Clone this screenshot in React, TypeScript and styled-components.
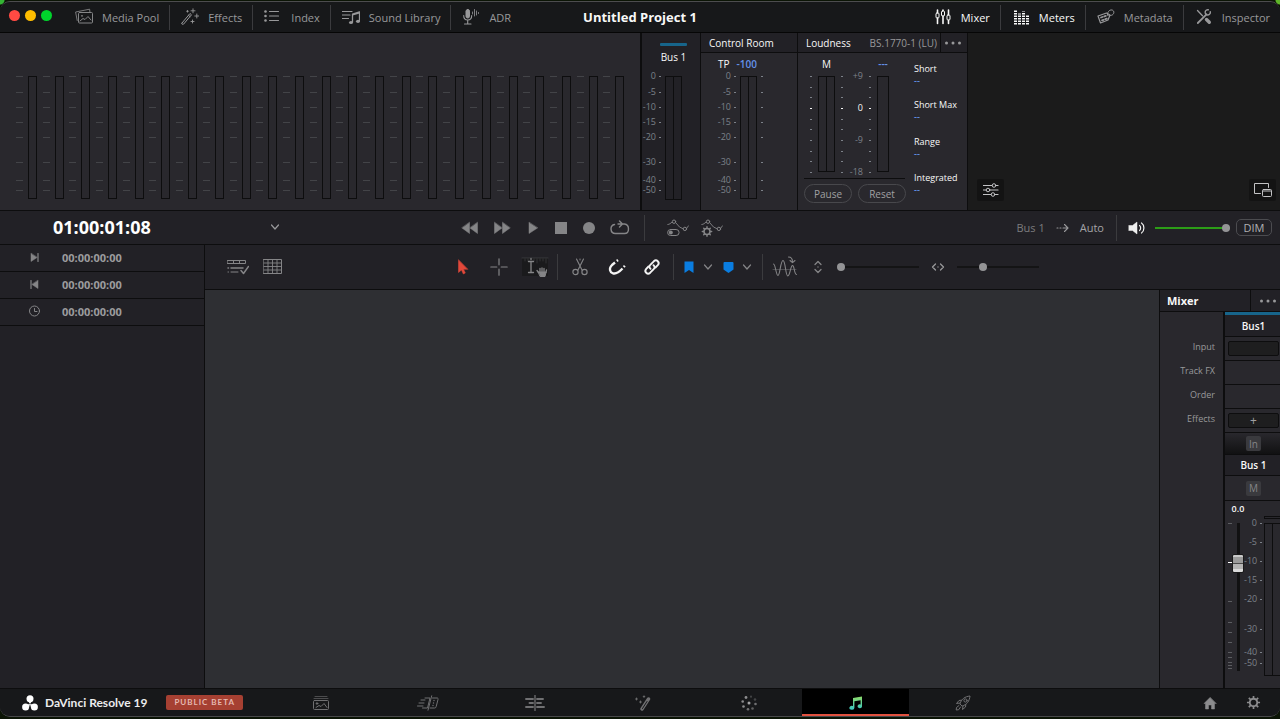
import React from 'react';
import styled, { createGlobalStyle, css } from 'styled-components';

const color = {
  bar: '#17181a',
  panel: '#29282d',
  panelDark: '#222126',
  canvas: '#2e2f33',
  line: '#0d0d0e',
  divider: '#3b3b3e',
  text: '#98989a',
  icon: '#858587',
  dim: '#7c8189',
  white: '#f8f8f8',
  blue: '#6492ea',
  bus: '#17658b',
};

const GlobalStyle = createGlobalStyle`
  * { box-sizing: border-box; }
  body {
    margin: 0;
    background:
      radial-gradient(circle at 0 0, #35b535 0 4px, transparent 5px),
      radial-gradient(circle at 100% 0, #5fb52a 0 4px, transparent 5px),
      #0b1405;
    color: ${color.text};
    font-family: "Open Sans", "Noto Sans", sans-serif;
    font-size: 11px;
  }
  button, input {
    margin: 0;
    padding: 0;
    border: 0;
    background: none;
    color: inherit;
    font: inherit;
  }
  svg { display: block; flex: none; }
`;

const Window = styled.div`
  min-height: 100vh;
  padding: 1px 0 2px;
  display: flex;
  flex-direction: column;
`;

const Frame = styled.div`
  flex: 1;
  display: flex;
  flex-direction: column;
  overflow: hidden;
  border-top: 1px solid #4c4c4e;
  border-bottom: 1px solid #48484a;
  border-radius: 10px;
  background: ${color.panelDark};
`;

/* ---------- header ---------- */

const Header = styled.header`
  display: grid;
  grid-template-columns: 1fr auto 1fr;
  align-items: center;
  height: 31px;
  background: ${color.bar};
  border-bottom: 1px solid #060606;
`;

const HeaderGroup = styled.div<{ $end?: boolean }>`
  display: flex;
  align-items: center;
  justify-content: ${p => (p.$end ? 'flex-end' : 'flex-start')};
`;

const Lights = styled.div`
  display: flex;
  gap: 5px;
  padding: 0 12px 3px 9px;
`;

const Light = styled.button<{ $color: string }>`
  width: 11px;
  height: 11px;
  border-radius: 50%;
  background: ${p => p.$color};
`;

const HeaderButton = styled.button<{ $on?: boolean }>`
  display: flex;
  align-items: center;
  gap: 9px;
  height: 25px;
  padding: 0 10px 0 11px;
  white-space: nowrap;
  color: ${p => (p.$on ? color.white : color.text)};
  & + & { border-left: 1px solid ${color.divider}; }
`;

const Title = styled.h1`
  margin: 0;
  padding-bottom: 1px;
  font-size: 13px;
  line-height: 18px;
  font-weight: 700;
  color: ${color.white};
`;

/* ---------- meters ---------- */

const MetersRow = styled.section`
  display: flex;
  min-height: 178px;
  background: ${color.panel};
  border-bottom: 1px solid ${color.line};
`;

const TrackMeters = styled.div`
  flex: 1;
  display: grid;
  grid-template-columns: repeat(23, 1fr);
  padding: 43px 10px 0 16px;
`;

const TrackMeter = styled.div`
  display: flex;
  align-items: flex-start;
  gap: 5px;
`;

const TrackTick = styled.div<{ $gap: number }>`
  width: 7px;
  height: ${p => p.$gap}px;
  border-top: 1px solid #434448;
`;

const Bar = styled.div<{ $height: number; $width?: number }>`
  display: flex;
  flex: none;
  width: ${p => p.$width ?? 17}px;
  height: ${p => p.$height}px;
  border: 1px solid ${color.line};
  span {
    flex: 1;
  }
  span + span { border-left: 1px solid ${color.line}; }
`;

const Scale = styled.div<{ $height?: number }>`
  display: flex;
  flex-direction: column;
  ${p => p.$height && css`
    height: ${p.$height}px;
    justify-content: space-between;
  `}
`;

const ScaleRow = styled.div<{ $gap: number; $strong?: boolean }>`
  display: flex;
  justify-content: flex-end;
  gap: 3px;
  height: ${p => p.$gap}px;
  font-size: 9px;
  line-height: 10px;
  white-space: nowrap;
  color: ${p => (p.$strong ? color.white : color.dim)};
`;

const Dash = styled.i`
  width: 2px;
  height: 1px;
  margin-top: 5px;
  background: currentColor;
`;

const BusPanel = styled.div`
  width: 60px;
  padding: 10px 0 0;
  background: ${color.panelDark};
  border-left: 2px solid ${color.line};
`;

const BusStripe = styled.div`
  width: 27px;
  height: 3px;
  margin: 0 0 4px 18px;
  border-radius: 1px;
  background: ${color.bus};
`;

const BusName = styled.div`
  width: 27px;
  margin: 0 0 7px 18px;
  font-size: 10px;
  line-height: 14px;
  text-align: center;
  white-space: nowrap;
  color: ${color.white};
`;

const MeterGroup = styled.div<{ $indent?: number }>`
  display: flex;
  align-items: flex-start;
  gap: 4px;
  padding-left: ${p => p.$indent ?? 0}px;
  ${Bar} { margin-top: 5px; }
  ${Scale}:first-child { width: 19px; }
`;

const Panel = styled.div<{ $width: number }>`
  width: ${p => p.$width}px;
  border-left: 1px solid ${color.line};
`;

const PanelHead = styled.div`
  display: flex;
  align-items: center;
  height: 20px;
  padding-left: 8px;
  font-size: 10px;
  color: ${color.white};
  background: ${color.panelDark};
  border-bottom: 1px solid ${color.line};
`;

const Standard = styled.span`
  margin-left: auto;
  padding-right: 3px;
  color: ${color.text};
`;

const DotsButton = styled.button`
  display: flex;
  align-items: center;
  justify-content: center;
  width: 27px;
  padding-right: 2px;
  align-self: stretch;
  border-left: 1px solid ${color.line};
  color: #98989a;
`;

const PeakRow = styled.div`
  display: flex;
  gap: 7px;
  padding: 4px 0 0 17px;
  font-size: 10px;
  line-height: 14px;
  color: ${color.white};
`;

const Value = styled.span`
  font-weight: 600;
  color: ${color.blue};
`;

const LoudnessBody = styled.div`
  display: flex;
  height: 157px;
`;

const LoudnessLeft = styled.div`
  width: 110px;
  padding: 4px 0 0 6px;
`;

const LoudnessGrid = styled.div`
  display: grid;
  grid-template-columns: 2px 17px 2px 14px 2px 12px;
  grid-template-rows: 14px 107px;
  column-gap: 6px;
  width: 101px;
  padding-left: 6px;
  border-bottom: 1px solid ${color.line};
  font-size: 10px;
  line-height: 14px;
  color: ${color.white};
  ${Bar} { margin-top: 5px; }
`;

const GridHead = styled.div<{ $column: number }>`
  grid-column: ${p => p.$column};
  text-align: center;
`;

const ButtonPair = styled.div`
  display: flex;
  gap: 6px;
  padding-top: 5px;
`;

const PillButton = styled.button`
  width: 48px;
  height: 19px;
  border: 1px solid #48484c;
  border-radius: 10px;
  font-size: 10px;
  line-height: 14px;
  color: #a0a0a2;
`;

const Stats = styled.dl`
  display: flex;
  flex-direction: column;
  justify-content: space-between;
  flex: 1;
  margin: 0;
  padding: 10px 0 14px 6px;
  font-size: 9px;
  line-height: 12px;
  white-space: nowrap;
  color: ${color.white};
  dd {
    margin: 0;
    font-weight: 600;
    color: ${color.blue};
  }
`;

const Preview = styled.div`
  display: flex;
  align-items: flex-end;
  justify-content: space-between;
  width: 313px;
  padding: 0 4px 9px 9px;
  background: #1b1b1b;
  border-left: 1px solid ${color.line};
`;

const PreviewButton = styled.button`
  display: flex;
  align-items: center;
  justify-content: center;
  width: 27px;
  height: 22px;
  border-radius: 2px;
  background: #131313;
  color: #c2c2c4;
`;

/* ---------- transport ---------- */

const Transport = styled.section`
  display: grid;
  grid-template-columns: 36% auto 1fr;
  align-items: center;
  height: 34px;
  border-bottom: 1px solid ${color.line};
`;

const ClockBox = styled.div`
  display: flex;
  align-items: center;
  gap: 119px;
  padding: 0 0 1px 53px;
`;

const Timecode = styled.output`
  font-size: 18px;
  line-height: 24px;
  font-weight: 700;
  color: #ffffff;
`;

const IconButton = styled.button<{ $width?: number; $color?: string }>`
  display: flex;
  align-items: center;
  justify-content: center;
  width: ${p => p.$width ?? 30}px;
  height: 24px;
  color: ${p => p.$color ?? color.icon};
`;

const IconRow = styled.div<{ $gap?: number; $before?: number; $after?: number }>`
  display: flex;
  align-items: center;
  gap: ${p => p.$gap ?? 0}px;
  padding: 0 ${p => p.$after ?? 0}px 0 ${p => p.$before ?? 0}px;
`;

const Divider = styled.i<{ $margin?: number }>`
  width: 1px;
  height: 26px;
  margin: 0 ${p => p.$margin ?? 0}px;
  background: ${color.divider};
`;

const Monitor = styled.div`
  display: flex;
  align-items: center;
  justify-content: flex-end;
  gap: 10px;
  padding-right: 8px;
`;

const TextButton = styled.button<{ $bright?: boolean }>`
  color: ${p => (p.$bright ? '#a4a4a6' : '#7c7c7e')};
`;

const DimButton = styled.button`
  width: 36px;
  height: 17px;
  border: 1px solid #4c4c50;
  border-radius: 5px;
  line-height: 14px;
  color: #b0b0b2;
`;

const Slider = styled.input<{ $width: number; $track?: string }>`
  appearance: none;
  width: ${p => p.$width}px;
  height: 10px;
  background: linear-gradient(${p => p.$track ?? '#141415'} 0 0) center / 100% 2px no-repeat;
  &::-webkit-slider-thumb {
    appearance: none;
    width: 8px;
    height: 8px;
    border-radius: 50%;
    background: #949496;
  }
`;

/* ---------- workspace ---------- */

const Workspace = styled.main`
  flex: 1;
  display: flex;
`;

const Sidebar = styled.aside`
  width: 16%;
  border-right: 1px solid ${color.line};
`;

const TimeRow = styled.div`
  display: flex;
  align-items: center;
  gap: 21px;
  height: 27px;
  padding: 0 0 2px 28px;
  font-weight: 700;
  color: #9c9c9e;
  border-bottom: 1px solid ${color.line};
  svg { color: ${color.icon}; }
`;

const Center = styled.div`
  flex: 1;
  display: flex;
  flex-direction: column;
`;

const Toolbar = styled.div`
  display: grid;
  grid-template-columns: 1fr auto 1fr;
  align-items: center;
  height: 45px;
  padding: 0 5px 0 16px;
  border-bottom: 1px solid ${color.line};
`;

const Stage = styled.div`
  flex: 1;
  display: flex;
`;

const Timeline = styled.div`
  flex: 1;
  background: ${color.canvas};
`;

/* ---------- mixer ---------- */

const Mixer = styled.aside`
  width: 121px;
  display: flex;
  flex-direction: column;
  background: ${color.panel};
  border-left: 1px solid ${color.line};
`;

const MixerHead = styled.div`
  display: flex;
  align-items: center;
  justify-content: space-between;
  height: 22px;
  padding-left: 7px;
  font-size: 11px;
  background: ${color.panelDark};
  border-bottom: 1px solid ${color.line};
  h2 {
    margin: 0;
    font-size: inherit;
    color: ${color.white};
  }
  ${DotsButton} { width: 30px; padding: 0 0 0 5px; }
`;

const MixerBody = styled.div`
  flex: 1;
  display: flex;
`;

const MixerLabels = styled.div`
  flex: 1;
  padding: 23px 8px 0 0;
  font-size: 9px;
  line-height: 24px;
  text-align: right;
`;

const Strip = styled.div`
  width: 57px;
  border-left: 2px solid ${color.line};
`;

const StripCell = styled.div<{ $height?: number; $title?: boolean; $fade?: boolean }>`
  display: flex;
  align-items: center;
  justify-content: center;
  height: ${p => p.$height ?? 24}px;
  padding: 0 1px 0 3px;
  font-size: 10px;
  border-bottom: 1px solid ${color.line};
  ${p => p.$title && css`
    font-weight: 600;
    color: ${color.white};
    background: ${color.panelDark};
  `}
  ${p => p.$fade && css`
    background: linear-gradient(${color.panel}, #111112);
  `}
`;

const StripStripe = styled.div`
  height: 3px;
  background: ${color.bus};
`;

const Slot = styled.button`
  width: 100%;
  height: 15px;
  border: 1px solid ${color.line};
  border-radius: 2px;
  font-size: 12px;
  line-height: 12px;
  background: #1e1e1f;
  color: #a0a0a2;
`;

const SquareButton = styled.button`
  width: 15px;
  height: 15px;
  border-radius: 2px;
  font-size: 10px;
  line-height: 14px;
  background: #3a3a3e;
  color: #858587;
`;

const Level = styled.div`
  width: 26px;
  padding-top: 2px;
  font-size: 9px;
  line-height: 12px;
  font-weight: 600;
  text-align: center;
  color: ${color.white};
`;

const FaderRow = styled.div`
  display: flex;
  align-items: flex-start;
  padding-left: 3px;
`;

const FaderScale = styled.div`
  width: 18px;
  padding-top: 3px;
`;

const FaderTicks = styled.div`
  width: 4px;
  padding-top: 8px;
`;

const FaderTick = styled.div<{ $gap: number; $zero?: boolean }>`
  height: ${p => p.$gap}px;
  border-top: 1px solid ${p => (p.$zero ? '#ffffff' : '#5c5d61')};
`;

const Fader = styled.input`
  appearance: none;
  writing-mode: vertical-lr;
  direction: rtl;
  width: 12px;
  height: 148px;
  margin: 8px 0 0;
  background: linear-gradient(#111112 0 0) center / 3px 100% no-repeat;
  &::-webkit-slider-thumb {
    appearance: none;
    width: 12px;
    height: 19px;
    border: 1px solid #1a1a1b;
    border-radius: 2px;
    background: linear-gradient(#c9c9c9 0 2px, #9b9b9b 2px 8px, #4a4a4a 8px 9px, #b4b4b4 9px 14px, #dadada 14px);
  }
`;

const StereoMeter = styled.div`
  flex: 1;
  margin-left: 2px;
  padding-top: 1px;
`;

const Peak = styled.div`
  height: 3px;
  margin-bottom: 4px;
  border: 1px solid ${color.line};
  border-right: 0;
`;

const Columns = styled.div`
  display: flex;
  height: 153px;
  border: 1px solid ${color.line};
  border-right: 0;
  span { width: 7px; }
  span + span { width: auto; flex: 1; border-left: 1px solid ${color.line}; }
`;

/* ---------- footer ---------- */

const Footer = styled.footer`
  display: grid;
  grid-template-columns: 1fr auto 1fr;
  align-items: center;
  height: 28px;
  padding: 0 19px 0 22px;
  background: ${color.bar};
  border-top: 1px solid ${color.line};
`;

const Brand = styled.div`
  display: flex;
  align-items: center;
  gap: 7px;
  font-family: Lato, sans-serif;
  font-size: 12px;
  font-weight: 700;
  white-space: nowrap;
  color: #ececed;
`;

const Beta = styled.span`
  margin-left: 12px;
  padding: 0 8px;
  border-radius: 2px;
  font-family: Lato, sans-serif;
  font-size: 8px;
  line-height: 15px;
  font-weight: 700;
  letter-spacing: 1px;
  background: #a64032;
  color: #e5b9b1;
`;

const Pages = styled.nav`
  display: flex;
  align-self: stretch;
`;

const PageButton = styled.button<{ $active?: boolean }>`
  display: flex;
  align-items: center;
  justify-content: center;
  width: 107px;
  padding-top: 2px;
  color: #707072;
  border-bottom: 2px solid ${p => (p.$active ? '#e2523f' : 'transparent')};
  background: ${p => (p.$active ? '#000000' : 'none')};
`;

const FooterEnd = styled.div`
  display: flex;
  justify-content: flex-end;
  gap: 29px;
  button { color: #8c8c8e; }
`;

/* ---------- icons ---------- */

interface IconProps {
  w?: number;
  h?: number;
  children: React.ReactNode;
}

const Icon = ({ w = 18, h = 18, children }: IconProps) => (
  <svg width={w} height={h} viewBox={`0 0 ${w} ${h}`} fill="none" stroke="currentColor" strokeLinecap="round" strokeLinejoin="round" aria-hidden="true">
    {children}
  </svg>
);

const MediaPoolIcon = () => (
  <Icon>
    <g opacity=".85">
      <path d="M2.200 12.500L.6 4l14-2.800.3 2.500" strokeWidth=".9" />
      <rect x="3.500" y="4.500" width="14" height="10.500" rx="1" />
      <circle cx="7" cy="7.800" r=".9" fill="currentColor" stroke="none" />
      <path d="M5 13l3-2.500 2 1 3-3 3 3.500" />
    </g>
  </Icon>
);

const WandIcon = () => (
  <Icon>
    <path d="M1 15l8-9.500 1.500 1.300-8 9.400c-.9.700-2.200-.2-1.500-1.200z" />
    <path d="M7.500 7.300L9 8.600" />
    <path d="M12 .8v4M10 2.800h4M15.800 6v4M13.800 8h4M11.500 12v3M10 13.500h3M6.500 2.500v1.600M5.700 3.300h1.600" strokeWidth=".9" />
  </Icon>
);

const IndexIcon = () => (
  <Icon>
    <g fill="currentColor" stroke="none">
      <circle cx="1.500" cy="3.500" r="1.300" />
      <circle cx="1.500" cy="8" r="1.300" />
      <circle cx="1.500" cy="12.500" r="1.300" />
    </g>
    <path d="M5.500 3.500h9M5.500 8h9M5.500 12.500h9" strokeWidth="1.200" />
  </Icon>
);

const LibraryIcon = () => (
  <Icon>
    <path d="M0 3.500h10M0 7h8M0 10.500h6.500" strokeWidth="1.200" />
    <path d="M10.500 14V6l7-2.200V13M10.500 7l7-2" strokeWidth="1.300" />
    <ellipse cx="9" cy="14.500" rx="2" ry="1.600" fill="currentColor" stroke="none" />
    <ellipse cx="16" cy="13.300" rx="2" ry="1.600" fill="currentColor" stroke="none" />
  </Icon>
);

const AdrIcon = () => (
  <Icon>
    <rect x="4" y="1.500" width="3.500" height="8.500" rx="1.700" fill="currentColor" />
    <path d="M1.700 7.500c0 6 8 6 8 0M5.700 12.500v3.300M2.500 16h6.500" strokeWidth="1.100" />
    <path d="M10.500 4v2M12.500 1.500v6.500M14.500 3v4M16.500 4.500v1" strokeWidth=".8" />
  </Icon>
);

const MixerIcon = () => (
  <Icon>
    <path d="M3.500 2v2.500M3.500 10v5.500M9 2v.5M9 8v7.500M14.500 2v4.500M14.500 12.500v3" strokeWidth="1.600" />
    <rect x="2" y="5" width="3" height="5" rx="1" />
    <rect x="7.500" y="3" width="3" height="5" rx="1" />
    <rect x="13" y="7" width="3" height="5" rx="1" />
  </Icon>
);

const MetersIcon = () => (
  <Icon>
    <path d="M3.500 16.500V2.500M7.500 16.500V5.500M11.500 16.500V3.500M15.500 16.500V6.500" strokeWidth="3" strokeDasharray="1.500 1" strokeLinecap="butt" />
  </Icon>
);

const MetadataIcon = () => (
  <Icon>
    <path d="M1 8l8.500-3L13 7l-2 5-7.500 3z" strokeWidth="1.200" />
    <path d="M4 9.500l1.500-.5M7.300 8.400l1.500-.5M5 12.300l1.500-.5M8.300 11.200l1.500-.5" strokeWidth="1.800" />
    <path d="M10.500 7.300C10 1.500 16 .5 16.800 3.800 17.200 6.500 14.500 8 11.800 7.500" />
  </Icon>
);

const InspectorIcon = () => (
  <Icon>
    <path d="M2.500 2.500l5 5.200" strokeWidth="1.300" />
    <path d="M11.500 11.500l2.800 2.800" strokeWidth="3.400" />
    <path d="M2.800 15l8.700-8.700" strokeWidth="1.800" />
    <path d="M15.300 3.800a2.600 2.600 0 1 1-2-2" strokeWidth="1.400" />
  </Icon>
);

const Dots = () => (
  <svg width="18" height="4" viewBox="0 0 18 4" fill="currentColor" aria-hidden="true">
    <circle cx="2.500" cy="2" r="1.500" />
    <circle cx="9" cy="2" r="1.500" />
    <circle cx="15.500" cy="2" r="1.500" />
  </svg>
);

const Chevron = () => (
  <Icon w={10} h={8}>
    <path d="M1.500 2L5 6l3.500-4" strokeWidth="1.200" />
  </Icon>
);

const GearIcon = ({ size = 16 }: { size?: number }) => (
  <svg width={size} height={size} viewBox="0 0 16 16" fill="none" stroke="currentColor" aria-hidden="true">
    <circle cx="8" cy="8" r="4" strokeWidth="2" />
    <path d="M8 1v3M8 12v3M1 8h3M12 8h3M3 3l2.200 2.200M10.800 10.800L13 13M13 3l-2.200 2.200M5.200 10.800L3 13" strokeWidth="1.800" />
  </svg>
);

const CurvePath = () => (
  <>
    <path d="M.8 5.500c2 0 2.700-1.300 4-2.300M9 4l3.500 4 3.300 1.600M20 8.800l1.500-2" strokeWidth=".9" />
    <circle cx="7" cy="2.700" r="1.700" />
    <circle cx="17.900" cy="9.900" r="1.700" />
  </>
);

const NoteIcon = () => (
  <svg width="13" height="14" viewBox="0 0 13 14" aria-hidden="true">
    <defs>
      <linearGradient id="note" x1="0" y1="0" x2="0" y2="1">
        <stop offset="0" stopColor="#8fdc6a" />
        <stop offset="1" stopColor="#38c8c4" />
      </linearGradient>
    </defs>
    <path d="M4 2l9-1.500v9.700a2.200 1.900 0 1 1-1.400-1.700V4.200L5.400 5.300v6.500A2.500 2 0 1 1 4 10z" fill="url(#note)" />
  </svg>
);

/* ---------- data ---------- */

const levels = [
  { label: '0', gap: 16 },
  { label: '-5', gap: 15 },
  { label: '-10', gap: 15 },
  { label: '-15', gap: 15 },
  { label: '-20', gap: 25 },
  { label: '-30', gap: 18 },
  { label: '-40', gap: 10 },
  { label: '-50', gap: 10 },
];

const faderGaps = [19, 19, 19, 19, 30, 23, 11, 10];
const faderTicks = [39, 39, 21, 10, 10, 10, 5, 5, 3, 3, 3];
const tracks = Array.from({ length: 23 }, (_, i) => i);
const loudnessSteps = Array.from({ length: 10 }, (_, i) => i);

const leftTabs = [
  { name: 'Media Pool', icon: <MediaPoolIcon /> },
  { name: 'Effects', icon: <WandIcon /> },
  { name: 'Index', icon: <IndexIcon /> },
  { name: 'Sound Library', icon: <LibraryIcon /> },
  { name: 'ADR', icon: <AdrIcon /> },
];

const rightTabs = [
  { name: 'Mixer', icon: <MixerIcon />, on: true },
  { name: 'Meters', icon: <MetersIcon />, on: true },
  { name: 'Metadata', icon: <MetadataIcon /> },
  { name: 'Inspector', icon: <InspectorIcon /> },
];

const stats = ['Short', 'Short Max', 'Range', 'Integrated'];

const pages = [
  {
    name: 'Media',
    icon: (
      <Icon w={16} h={16}>
        <path d="M2 1.500h12M1 3.500h14" opacity=".6" />
        <rect x=".5" y="5.500" width="15" height="9" rx="1" />
        <circle cx="4" cy="8.500" r=".8" fill="currentColor" />
        <path d="M3 12.500l3-2 2 1 3-3 3 4" />
      </Icon>
    ),
  },
  {
    name: 'Cut',
    icon: (
      <Icon w={22} h={16}>
        <path d="M8 3h5l-2.500 10h-5M15.500 3H20c1 0 1.300.6 1 1.500l-1.800 7c-.2 1-.7 1.500-1.500 1.500H13M14.700.8L11 15.200" />
        <path d="M4 5h4M2 8h5M.5 11H6" />
        <path d="M17 5.500v0M16.500 8v0M16 10.500v0" strokeWidth="1.400" />
      </Icon>
    ),
  },
  {
    name: 'Edit',
    icon: (
      <Icon w={20} h={16}>
        <path d="M10 .5v15" strokeWidth="1.300" />
        <path d="M1 4h7M12 4h6M4.500 8H8M12 8h4M1 12h7M12 12h7" strokeWidth="1.900" />
      </Icon>
    ),
  },
  {
    name: 'Fusion',
    icon: (
      <Icon w={18} h={16}>
        <path d="M9 14L15.500 4" strokeWidth="3.400" />
        <path d="M9.500 13.500L14 6.500" strokeWidth="1" stroke="#17181a" />
        <path d="M11 .8v1.600M10.200 1.600h1.600M3.500 3v2M2.500 4h2M7.500 6v2M6.500 7h2" strokeWidth=".9" />
      </Icon>
    ),
  },
  {
    name: 'Color',
    icon: (
      <Icon w={16} h={16}>
        <g fill="currentColor" stroke="none">
          <circle cx="8" cy="8" r="1.500" fill="#a4a4a6" />
          <circle cx="5" cy="2.500" r="1.400" fill="#8c8c8e" />
          <circle cx="10" cy="1.700" r="1.100" opacity=".5" />
          <circle cx="14" cy="4.500" r="1.300" opacity=".5" />
          <circle cx="14.500" cy="9" r="1.300" />
          <circle cx="11.500" cy="13.500" r="1.300" opacity=".8" />
          <circle cx="7" cy="14.300" r="1.300" />
          <circle cx="2.500" cy="11.500" r="1.300" fill="#8c8c8e" />
          <circle cx="1.700" cy="6.500" r="1.300" fill="#8c8c8e" />
        </g>
      </Icon>
    ),
  },
  { name: 'Fairlight', icon: <NoteIcon />, active: true },
  {
    name: 'Deliver',
    icon: (
      <Icon w={16} h={16}>
        <path d="M5 8.500C6.500 4 10 1.500 15 1c-.5 5-3 8.500-7.500 10zM5 8l-3.500.5L4 5.500l2.500-.3M8 11l-.5 3.500 3-2.500.3-2.500M4 10.500L1.500 12.500l-.3 2.500 2.500-.3L5.500 12" />
        <circle cx="10.500" cy="5.500" r="1.600" />
      </Icon>
    ),
  },
];

/* ---------- composed parts ---------- */

const LevelScale = ({ gaps }: { gaps?: number[] }) => (
  <Scale>
    {levels.map((l, i) => (
      <ScaleRow key={l.label} $gap={gaps ? gaps[i] : l.gap}>
        {l.label}
        <Dash />
      </ScaleRow>
    ))}
  </Scale>
);

const DashScale = () => (
  <Scale>
    {levels.map(l => (
      <ScaleRow key={l.label} $gap={l.gap}><Dash /></ScaleRow>
    ))}
  </Scale>
);

const LoudnessTicks = () => (
  <Scale $height={106}>
    {loudnessSteps.map(i => (
      <ScaleRow key={i} $gap={10} $strong={i === 3}><Dash /></ScaleRow>
    ))}
  </Scale>
);

const AppHeader = () => (
  <Header>
    <HeaderGroup>
      <Lights>
        <Light $color="#ff4a43" aria-label="Close" />
        <Light $color="#ffbd00" aria-label="Minimize" />
        <Light $color="#00d42c" aria-label="Zoom" />
      </Lights>
      <HeaderGroup>
        {leftTabs.map(t => <HeaderButton key={t.name}>{t.icon}{t.name}</HeaderButton>)}
      </HeaderGroup>
    </HeaderGroup>
    <Title>Untitled Project 1</Title>
    <HeaderGroup $end>
      {rightTabs.map(t => <HeaderButton key={t.name} $on={t.on}>{t.icon}{t.name}</HeaderButton>)}
    </HeaderGroup>
  </Header>
);

const Meters = () => (
  <MetersRow>
    <TrackMeters>
      {tracks.map(i => (
        <TrackMeter key={i}>
          <div>{levels.map(l => <TrackTick key={l.label} $gap={l.gap} />)}</div>
          <Bar $width={9} $height={123} />
        </TrackMeter>
      ))}
    </TrackMeters>
    <BusPanel>
      <BusStripe />
      <BusName>Bus 1</BusName>
      <MeterGroup>
        <LevelScale />
        <Bar $height={124}><span /><span /></Bar>
      </MeterGroup>
    </BusPanel>
    <Panel $width={97}>
      <PanelHead>Control Room</PanelHead>
      <PeakRow>TP <Value>-100</Value></PeakRow>
      <MeterGroup $indent={16}>
        <LevelScale />
        <Bar $height={123}><span /><span /></Bar>
        <DashScale />
      </MeterGroup>
    </Panel>
    <Panel $width={170}>
      <PanelHead>
        Loudness
        <Standard>BS.1770-1 (LU)</Standard>
        <DotsButton aria-label="Loudness options"><Dots /></DotsButton>
      </PanelHead>
      <LoudnessBody>
        <LoudnessLeft>
          <LoudnessGrid>
            <GridHead $column={2}>M</GridHead>
            <GridHead $column={6}><Value>---</Value></GridHead>
            <LoudnessTicks />
            <Bar $height={96}><span /><span /></Bar>
            <LoudnessTicks />
            <Scale $height={106}>
              {['+9', '0', '-9', '-18'].map(v => (
                <ScaleRow key={v} $gap={10} $strong={v === '0'}>{v}</ScaleRow>
              ))}
            </Scale>
            <LoudnessTicks />
            <Bar $width={12} $height={96} />
          </LoudnessGrid>
          <ButtonPair>
            <PillButton>Pause</PillButton>
            <PillButton>Reset</PillButton>
          </ButtonPair>
        </LoudnessLeft>
        <Stats>
          {stats.map(s => <div key={s}><dt>{s}</dt><dd>--</dd></div>)}
        </Stats>
      </LoudnessBody>
    </Panel>
    <Preview>
      <PreviewButton aria-label="Viewer settings">
        <Icon w={16} h={14}>
          <path d="M.5 2.500H9M13 2.500h2M.5 7H3M7 7h8M.5 11.500H8M12 11.500h3" strokeWidth="1.200" />
          <circle cx="11" cy="2.500" r="1.800" />
          <circle cx="5" cy="7" r="1.800" />
          <circle cx="10" cy="11.500" r="1.800" />
        </Icon>
      </PreviewButton>
      <PreviewButton aria-label="Undock viewer">
        <Icon w={18} h={14}>
          <path d="M6.500 10.500h-6V.5h14v4" />
          <rect x="8.500" y="6.500" width="9" height="7" rx="1" />
          <path d="M9 8h8" />
        </Icon>
      </PreviewButton>
    </Preview>
  </MetersRow>
);

const TransportBar = () => (
  <Transport>
    <ClockBox>
      <Timecode>01:00:01:08</Timecode>
      <button aria-label="Timelines"><Chevron /></button>
    </ClockBox>
    <IconRow>
      <IconButton $width={18} aria-label="Rewind">
        <Icon w={18} h={14}><path d="M8.500 1.500v11L1 7zM16.500 1.500v11L9 7z" fill="currentColor" strokeWidth=".5" /></Icon>
      </IconButton>
      <IconButton $width={46} aria-label="Fast forward">
        <Icon w={18} h={14}><path d="M1.500 1.500v11L9 7zM9.500 1.500v11L17 7z" fill="currentColor" strokeWidth=".5" /></Icon>
      </IconButton>
      <IconButton $width={16} aria-label="Play">
        <Icon w={12} h={14}><path d="M2 1.500v11L10.500 7z" fill="currentColor" strokeWidth=".5" /></Icon>
      </IconButton>
      <IconButton $width={40} aria-label="Stop">
        <Icon w={12} h={12}><rect width="12" height="12" fill="currentColor" stroke="none" /></Icon>
      </IconButton>
      <IconButton $width={16} aria-label="Record">
        <Icon w={12} h={12}><circle cx="6" cy="6" r="6" fill="currentColor" stroke="none" /></Icon>
      </IconButton>
      <IconButton $width={47} aria-label="Loop">
        <Icon w={20} h={16}>
          <path d="M4.500 4.500c-5 1-4.500 9 .8 9h9.200c5.300 0 5.300-9 0-9.500H8M9.500 1l3 3-3 3" strokeWidth="1.400" />
        </Icon>
      </IconButton>
      <Divider />
      <IconButton $width={66} aria-label="Automation">
        <Icon w={22} h={18}>
          <CurvePath />
          <rect x=".6" y="10.500" width="11.500" height="6" rx="3" />
          <circle cx="3.800" cy="13.500" r="2" fill="currentColor" stroke="none" />
        </Icon>
      </IconButton>
      <IconButton $width={2} aria-label="Automation settings">
        <Icon w={22} h={18}>
          <CurvePath />
          <circle cx="6" cy="12.500" r="3" strokeWidth="1.600" />
          <path d="M6 7.800v1.200M6 16v1.200M1.300 12.500h1.200M9.500 12.500h1.200M2.700 9.200l.8.800M8.500 15l.8.800M9.300 9.200l-.8.800M3.500 15l-.8.800" strokeWidth="1.400" />
        </Icon>
      </IconButton>
    </IconRow>
    <Monitor>
      <IconRow $gap={11} $after={2}>
        <TextButton>Bus 1</TextButton>
        <Icon w={13} h={10}>
          <path d="M1 5h1M4 5h1M7 5h4.500M8.500 1.500L12 5 8.500 8.500" strokeWidth="1.100" />
        </Icon>
        <TextButton $bright>Auto</TextButton>
      </IconRow>
      <Divider />
      <IconButton $width={18} $color="#f0f0f0" aria-label="Mute monitor">
        <Icon w={17} h={14}>
          <path d="M1 4.500h3.500L9 1v12L4.500 9.500H1z" fill="currentColor" strokeWidth=".5" />
          <path d="M11.500 4.500c1.500 1.200 1.500 3.800 0 5M13.500 2c3.200 2.200 3.200 7.800 0 10" strokeWidth="1.200" />
        </Icon>
      </IconButton>
      <IconRow $gap={6}>
        <Slider type="range" $width={75} $track="#2c9d17" defaultValue={100} aria-label="Monitor volume" />
        <DimButton>DIM</DimButton>
      </IconRow>
    </Monitor>
  </Transport>
);

const Tools = () => (
  <Toolbar>
    <IconRow $before={1}>
      <IconButton $width={32} aria-label="Timeline view options">
        <Icon w={22} h={16}>
          <rect x=".5" y="1.500" width="18" height="3" />
          <path d="M6.500 1.500v3M12.500 1.500v3M1 13h.5M4 13h7" />
          <path d="M1 9h.5M4 9h12" strokeWidth="1.500" />
          <path d="M14 11.500l2.500 3 5-7" strokeWidth="1.500" />
        </Icon>
      </IconButton>
      <IconButton $width={38} aria-label="Index grid">
        <Icon w={20} h={16}>
          <rect x=".5" y=".5" width="18" height="14" />
          <path d="M5 1v13M9.500 1v13M14 1v13M1 4h17M1 7.500h17M1 11h17" strokeWidth=".9" />
        </Icon>
      </IconButton>
    </IconRow>
    <IconRow>
      <IconButton $width={12} $color="#e2483a" aria-label="Pointer">
        <Icon w={12} h={16}><path d="M1.500 1v12.500l3-2.500 1.800 4 2-1-1.700-3.700h4z" fill="currentColor" strokeWidth=".5" /></Icon>
      </IconButton>
      <IconButton $width={60} aria-label="Range">
        <Icon w={18} h={18}><path d="M9 .8v6M9 11.200v6M.8 9h6M11.200 9h6" strokeWidth="1.200" /></Icon>
      </IconButton>
      <IconButton $width={13} aria-label="Edit selection">
        <Icon w={28} h={20}>
          <path d="M1 1h26v18H1z" fill="#1a1a1c" stroke="none" />
          <path d="M1 1h26M4 2v2M7 2v2M13 2v2M16 2v4M19 2v2M22 2v2M25 2v4" strokeWidth=".7" opacity=".35" />
          <path d="M7.500 4.500h5M10 4.500v11M7.500 15.500h5M10 1.500v1" strokeWidth="1.300" />
          <path d="M17.500 15.500L16 13.500M19 15v-3.500M21 15v-4M23 15v-3.500M25 15.500l.5-2.500" strokeWidth="1.300" />
          <path d="M17.500 15h7.500l-1 4.500h-4.500z" fill="currentColor" />
        </Icon>
      </IconButton>
      <Divider $margin={15} />
      <IconButton $width={15} aria-label="Split">
        <Icon w={18} h={18}>
          <path d="M5.500 1l5.500 11M12.500 1L7 12" strokeWidth="1.100" />
          <circle cx="4.500" cy="14" r="2.600" strokeWidth="1.200" />
          <circle cx="13.500" cy="14" r="2.600" strokeWidth="1.200" />
          <path d="M9 1v1" />
        </Icon>
      </IconButton>
      <IconButton $width={58} $color="#f4f4f4" aria-label="Snapping">
        <Icon w={18} h={18}>
          <path d="M7 4.500L4 7C.5 10.500 2 14.500 5 15.300c3 .9 5.500-.5 9.500-4.800" strokeWidth="2.300" strokeLinecap="butt" />
          <path d="M8.800 3l1.200-1M15.800 9l1-1.200" strokeWidth="2.300" strokeLinecap="butt" />
        </Icon>
      </IconButton>
      <IconButton $width={12} $color="#f4f4f4" aria-label="Link clips">
        <Icon w={18} h={18}>
          <g strokeWidth="1.900">
            <path d="M7.500 10.800c-1.500-1.200-1.300-2.800-.2-3.900l3.500-3.600c2.800-2.500 6.500 1 4 3.900L12.500 9.500" />
            <path d="M10.500 7.200c1.500 1.200 1.300 2.800.2 3.900l-3.500 3.600c-2.800 2.500-6.500-1-4-3.900L5.500 8.500" />
          </g>
        </Icon>
      </IconButton>
      <Divider $margin={15} />
      <IconButton $width={1} $color="#0a7de0" aria-label="Flag">
        <Icon w={10} h={13}><path d="M.5.5h9v11.500L5 9 .5 12z" fill="currentColor" stroke="none" /></Icon>
      </IconButton>
      <IconButton $width={36} aria-label="Flag colour"><Chevron /></IconButton>
      <IconButton $width={6} $color="#0a7de0" aria-label="Marker">
        <Icon w={11} h={13}><path d="M.5 2Q.5 1 1.500 1h8q1 0 1 1v6.500L5.500 12 .5 8.500z" fill="currentColor" stroke="none" /></Icon>
      </IconButton>
      <IconButton $width={30} aria-label="Marker colour"><Chevron /></IconButton>
      <Divider />
      <IconButton $width={44} aria-label="Waveform zoom">
        <Icon w={26} h={22}>
          <path d="M1.500 8C3.500 8 4 19.500 6 19.500S8.500 4.500 11 4.500s2.500 15.500 4.800 15.500S18.500 9.500 20.500 9.500s1.500 8.500 4 9" strokeWidth="1.100" />
          <path d="M1 13.500h23" strokeWidth=".7" opacity=".6" />
          <path d="M16.500 1c3 0 4 1.500 4 5M18 4.500l2.500 2.200L23 4.500" strokeWidth="1.100" />
        </Icon>
      </IconButton>
      <IconButton $width={22} aria-label="Vertical zoom">
        <Icon w={10} h={14}>
          <path d="M2 4.500l3-3 3 3M2 9.500l3 3 3-3M5 7v0" strokeWidth="1.300" />
        </Icon>
      </IconButton>
      <IconRow $gap={12} $before={8}>
        <Slider type="range" $width={82} defaultValue={0} aria-label="Vertical zoom level" />
        <Icon w={14} h={10}>
          <path d="M4.500 2l-3 3 3 3M9.500 2l3 3-3 3M7 5v0" strokeWidth="1.300" />
        </Icon>
        <Slider type="range" $width={82} defaultValue={30} aria-label="Horizontal zoom level" />
      </IconRow>
    </IconRow>
  </Toolbar>
);

const MixerPanel = () => (
  <Mixer>
    <MixerHead>
      <h2>Mixer</h2>
      <DotsButton aria-label="Mixer options"><Dots /></DotsButton>
    </MixerHead>
    <MixerBody>
      <MixerLabels>
        {['Input', 'Track FX', 'Order', 'Effects'].map(l => <div key={l}>{l}</div>)}
      </MixerLabels>
      <Strip>
        <StripStripe />
        <StripCell $height={22} $title>Bus1</StripCell>
        <StripCell><Slot aria-label="Input" /></StripCell>
        <StripCell />
        <StripCell />
        <StripCell><Slot aria-label="Add effect">+</Slot></StripCell>
        <StripCell $height={22} $fade><SquareButton>In</SquareButton></StripCell>
        <StripCell $height={21} $title>Bus 1</StripCell>
        <StripCell $height={25}><SquareButton>M</SquareButton></StripCell>
        <Level>0.0</Level>
        <FaderRow>
          <FaderTicks>
            {faderTicks.map((g, i) => <FaderTick key={i} $gap={g} $zero={i === 1} />)}
          </FaderTicks>
          <Fader type="range" defaultValue={76} aria-label="Bus 1 level" />
          <FaderScale>
            <LevelScale gaps={faderGaps} />
          </FaderScale>
          <StereoMeter>
            <Peak />
            <Columns><span /><span /></Columns>
          </StereoMeter>
        </FaderRow>
      </Strip>
    </MixerBody>
  </Mixer>
);

const AppFooter = () => (
  <Footer>
    <Brand>
      <svg width="16" height="16" viewBox="0 0 16 16" fill="#ffffff" aria-hidden="true">
        <circle cx="8" cy="3.700" r="3.500" />
        <circle cx="3.600" cy="12" r="3.500" />
        <circle cx="12.400" cy="12" r="3.500" />
        <path d="M8 9L6 6h4zM8 9l-3 .5 2 3zM8 9l3 .5-2 3z" />
      </svg>
      DaVinci Resolve 19
      <Beta>PUBLIC BETA</Beta>
    </Brand>
    <Pages>
      {pages.map(p => (
        <PageButton key={p.name} $active={p.active} aria-label={p.name}>{p.icon}</PageButton>
      ))}
    </Pages>
    <FooterEnd>
      <button aria-label="Project manager">
        <Icon w={14} h={14}>
          <path d="M7 1.500L1 7.500h1.500V13h3V9h3v4h3V7.500H13z" fill="currentColor" strokeWidth=".5" />
        </Icon>
      </button>
      <button aria-label="Project settings"><GearIcon size={15} /></button>
    </FooterEnd>
  </Footer>
);

export default function App() {
  return (
    <Window>
      <GlobalStyle />
      <Frame>
        <AppHeader />
        <Meters />
        <TransportBar />
        <Workspace>
          <Sidebar>
            <TimeRow>
              <Icon w={13} h={13}>
                <path d="M3 2.500v8l6-4z" fill="currentColor" strokeWidth=".5" />
                <path d="M10 2.500v8" strokeWidth="1.200" />
              </Icon>
              00:00:00:00
            </TimeRow>
            <TimeRow>
              <Icon w={13} h={13}>
                <path d="M10 2.500v8l-6-4z" fill="currentColor" strokeWidth=".5" />
                <path d="M3 2.500v8" strokeWidth="1.200" />
              </Icon>
              00:00:00:00
            </TimeRow>
            <TimeRow>
              <Icon w={13} h={13}>
                <circle cx="6.500" cy="6" r="5" />
                <path d="M6.500 3.500v3h2.500" />
              </Icon>
              00:00:00:00
            </TimeRow>
          </Sidebar>
          <Center>
            <Tools />
            <Stage>
              <Timeline />
              <MixerPanel />
            </Stage>
          </Center>
        </Workspace>
        <AppFooter />
      </Frame>
    </Window>
  );
}
